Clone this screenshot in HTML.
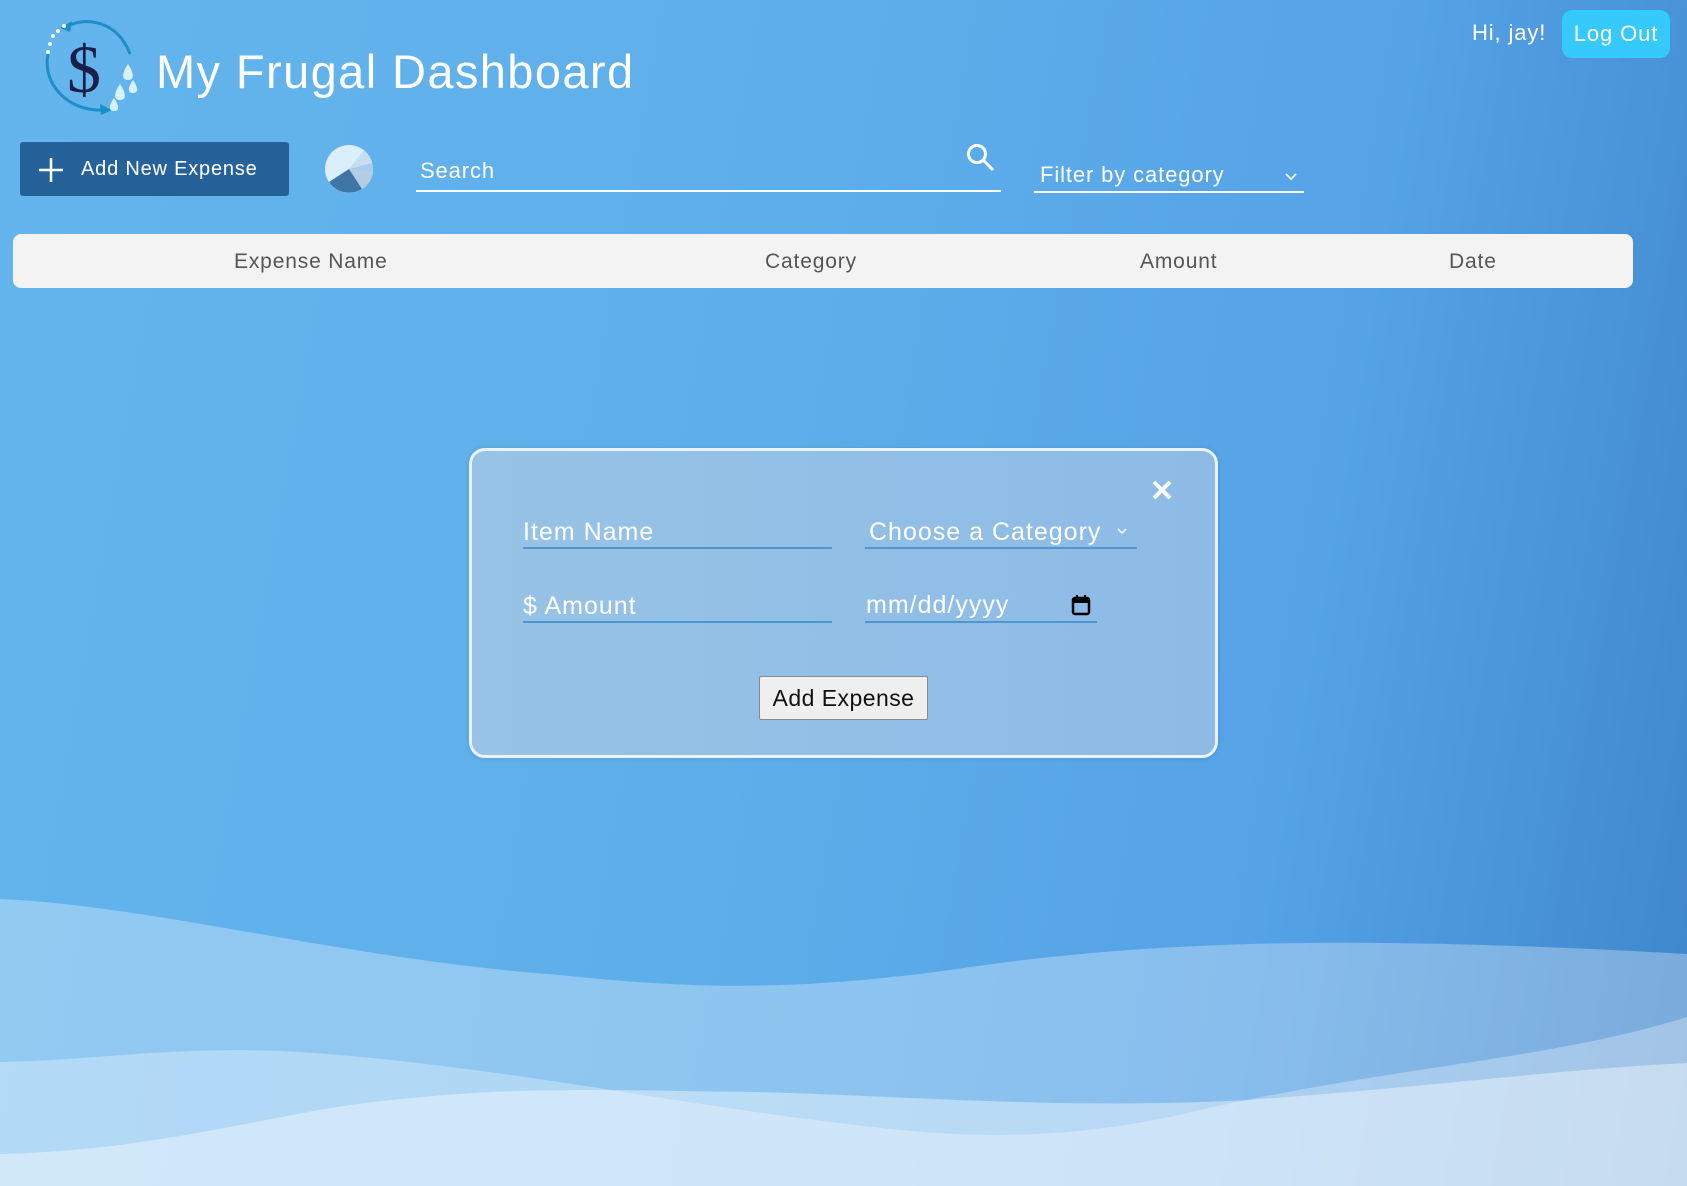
<!DOCTYPE html>
<html><head><meta charset="utf-8"><style>
*{margin:0;padding:0;box-sizing:border-box}
body{width:1687px;height:1186px;overflow:hidden;position:relative;font-family:"Liberation Sans",sans-serif;color:#fff;
background:linear-gradient(100deg,#64b4ed 0%,#5eaeea 45%,#55a2e6 75%,#3f86cc 100%);}
.abs{position:absolute}
.t{white-space:nowrap;letter-spacing:0.04em}
</style></head><body>
<svg class="abs" style="left:0;top:0" width="1687" height="1186" viewBox="0 0 1687 1186">
<path d="M0 899 C150 905 350 960 560 975 C700 990 800 990 950 970 C1150 940 1350 935 1687 954 L1687 1186 L0 1186Z" fill="#ffffff" fill-opacity="0.3"/>
<path d="M0 1062 C100 1060 180 1045 300 1052 C500 1065 700 1110 900 1130 C1000 1140 1100 1135 1200 1110 C1400 1065 1550 1060 1687 1017 L1687 1186 L0 1186Z" fill="#ffffff" fill-opacity="0.3"/>
<path d="M0 1154 C150 1150 250 1120 350 1105 C500 1085 600 1090 750 1092 C900 1095 1050 1110 1250 1100 C1450 1085 1550 1070 1687 1063 L1687 1186 L0 1186Z" fill="#ffffff" fill-opacity="0.4"/>
</svg>
<svg class="abs" style="left:38px;top:14px" width="104" height="102" viewBox="0 0 104 102">
<path d="M30 12 C50 2 80 8 92 40" stroke="#1a8fc8" stroke-width="3" fill="none"/>
<path d="M22 14 L34 7 L32 18Z" fill="#1a8fc8"/>
<path d="M10 40 C4 70 30 98 66 96" stroke="#1a8fc8" stroke-width="3" fill="none"/>
<path d="M74 96 L62 90 L63 101Z" fill="#1a8fc8"/>
<circle cx="10" cy="38" r="2" fill="#fff"/><circle cx="12" cy="30" r="2" fill="#fff"/><circle cx="15" cy="22" r="2" fill="#fff"/><circle cx="20" cy="17" r="2" fill="#fff"/><circle cx="26" cy="12" r="2" fill="#fff"/>
<text x="46" y="78" font-family="Liberation Serif,serif" font-size="68" fill="#1a1f4a" text-anchor="middle">$</text>
<path d="M90 50 c-6 9 -7 16 0 16 c7 0 6 -7 0 -16z M82 70 c-6 9 -7 16 0 16 c7 0 6 -7 0 -16z M95 66 c-5 7 -6 13 0 13 c6 0 5 -6 0 -13z M76 84 c-5 7 -6 13 0 13 c6 0 5 -6 0 -13z" fill="#d6f0ff"/>
</svg>
<div class="abs t" style="left:156px;top:44px;font-size:47px;letter-spacing:1.4px">My Frugal Dashboard</div>
<div class="abs t" style="left:1472px;top:20px;font-size:22px;">Hi, jay!</div>
<div class="abs t" style="left:1562px;top:10px;width:108px;height:48px;border-radius:10px;background:#36c9fb;font-size:22px;line-height:48px;text-align:center">Log Out</div>
<div class="abs t" style="left:20px;top:142px;width:269px;height:54px;border-radius:3px;background:#26629a;font-size:20px;line-height:54px;padding-left:61px">Add New Expense</div>
<svg class="abs" style="left:36px;top:155px" width="30" height="30"><path d="M15 3V27M3 15H27" stroke="#fff" stroke-width="2.5"/></svg>
<svg class="abs" style="left:325px;top:145px" width="48" height="48" viewBox="-24 -24 48 48">
<circle r="24" fill="#dbeefc"/>
<path d="M0 0 L15 -19 A24 24 0 0 1 23 -6Z" fill="#c6def2"/>
<path d="M0 0 L23 -6 A24 24 0 0 1 24 3Z" fill="#a8cbea"/>
<path d="M0 0 L24 3 A24 24 0 0 1 13 20Z" fill="#b5cde2"/>
<path d="M0 0 L13 20 A24 24 0 0 1 -20 13Z" fill="#3e76a8"/>
</svg>
<div class="abs t" style="left:420px;top:158px;font-size:22px;">Search</div>
<div class="abs" style="left:416px;top:190px;width:585px;height:2px;background:#fff"></div>
<svg class="abs" style="left:965px;top:142px" width="32" height="32"><circle cx="12" cy="12" r="8.5" stroke="#fff" stroke-width="3" fill="none"/><path d="M18 18 L28 28" stroke="#fff" stroke-width="3"/></svg>
<div class="abs t" style="left:1040px;top:162px;font-size:22px;">Filter by category</div>
<svg class="abs" style="left:1284px;top:172px" width="14" height="10"><path d="M2 2 L7 7 L12 2" stroke="#fff" stroke-width="1.8" fill="none"/></svg>
<div class="abs" style="left:1034px;top:191px;width:270px;height:2px;background:#fff"></div>
<div class="abs" style="left:13px;top:234px;width:1620px;height:54px;border-radius:8px;background:#f3f3f3;color:#555;font-size:21px">
<span class="abs t" style="left:221px;top:16px">Expense Name</span>
<span class="abs t" style="left:752px;top:16px">Category</span>
<span class="abs t" style="left:1127px;top:16px">Amount</span>
<span class="abs t" style="left:1436px;top:16px">Date</span>
</div>
<div class="abs" style="left:469px;top:448px;width:749px;height:310px;border:3px solid #eaf2fa;border-radius:16px;background:linear-gradient(90deg,#97c3e6,#8dbbe6);box-shadow:0 0 6px rgba(0,0,0,0.1)"></div>
<svg class="abs" style="left:1151px;top:479px" width="22" height="22"><path d="M3 3L19 19M19 3L3 19" stroke="#fff" stroke-width="4"/></svg>
<div class="abs t" style="left:523px;top:518px;font-size:25px;">Item Name</div>
<div class="abs" style="left:523px;top:547px;width:309px;height:2px;background:#4f95cf"></div>
<div class="abs t" style="left:869px;top:518px;font-size:25px;">Choose a Category</div>
<svg class="abs" style="left:1116px;top:527px" width="12" height="9"><path d="M2 2 L6 6 L10 2" stroke="#fff" stroke-width="1.5" fill="none"/></svg>
<div class="abs" style="left:865px;top:547px;width:272px;height:2px;background:#4f95cf"></div>
<div class="abs t" style="left:523px;top:592px;font-size:25px;">$ Amount</div>
<div class="abs" style="left:523px;top:621px;width:309px;height:2px;background:#4f95cf"></div>
<div class="abs t" style="left:866px;top:591px;font-size:25px;">mm/dd/yyyy</div>
<svg class="abs" style="left:1071px;top:594px" width="20" height="22"><rect x="2" y="4" width="16" height="16" rx="2" stroke="#000" stroke-width="2.5" fill="none"/><rect x="2" y="4" width="16" height="5" fill="#000"/><path d="M6 1V5M14 1V5" stroke="#000" stroke-width="2"/></svg>
<div class="abs" style="left:865px;top:621px;width:232px;height:2px;background:#4f95cf"></div>
<div class="abs t" style="left:759px;top:676px;width:169px;height:44px;background:#efefef;border:1px solid #8a8a8a;border-radius:2px;color:#111;font-size:23px;line-height:42px;text-align:center;letter-spacing:0.02em">Add Expense</div>
</body></html>
